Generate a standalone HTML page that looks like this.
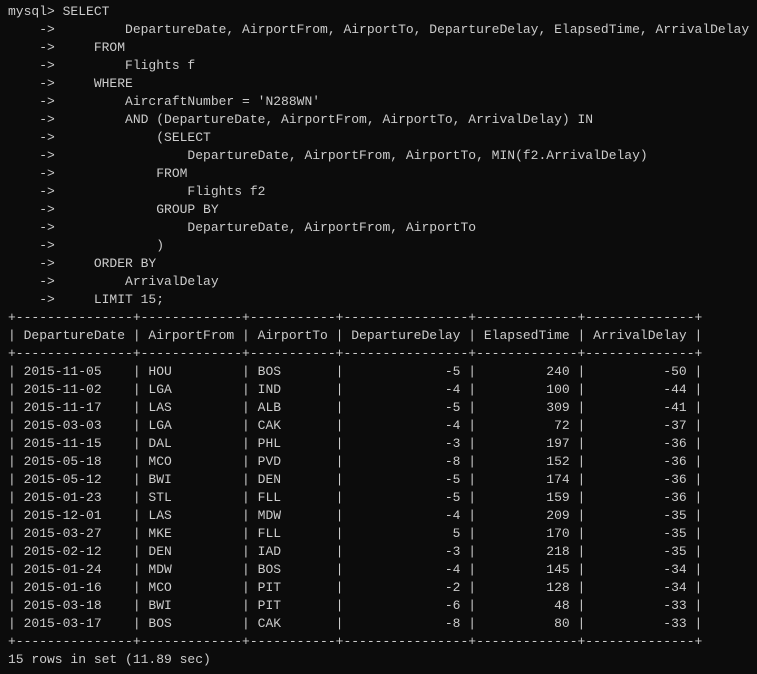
<!DOCTYPE html>
<html><head><meta charset="utf-8"><style>
html,body{margin:0;padding:0;background:#0c0c0c;width:757px;height:674px;overflow:hidden}
pre{margin:0;padding:3px 0 0 8px;font-family:"Liberation Mono","DejaVu Sans Mono",monospace;font-size:13px;line-height:18px;color:#cccccc;white-space:pre}
</style></head><body><pre>mysql&gt; SELECT
    -&gt;         DepartureDate, AirportFrom, AirportTo, DepartureDelay, ElapsedTime, ArrivalDelay
    -&gt;     FROM
    -&gt;         Flights f
    -&gt;     WHERE
    -&gt;         AircraftNumber = 'N288WN'
    -&gt;         AND (DepartureDate, AirportFrom, AirportTo, ArrivalDelay) IN
    -&gt;             (SELECT
    -&gt;                 DepartureDate, AirportFrom, AirportTo, MIN(f2.ArrivalDelay)
    -&gt;             FROM
    -&gt;                 Flights f2
    -&gt;             GROUP BY
    -&gt;                 DepartureDate, AirportFrom, AirportTo
    -&gt;             )
    -&gt;     ORDER BY
    -&gt;         ArrivalDelay
    -&gt;     LIMIT 15;
+---------------+-------------+-----------+----------------+-------------+--------------+
| DepartureDate | AirportFrom | AirportTo | DepartureDelay | ElapsedTime | ArrivalDelay |
+---------------+-------------+-----------+----------------+-------------+--------------+
| 2015-11-05    | HOU         | BOS       |             -5 |         240 |          -50 |
| 2015-11-02    | LGA         | IND       |             -4 |         100 |          -44 |
| 2015-11-17    | LAS         | ALB       |             -5 |         309 |          -41 |
| 2015-03-03    | LGA         | CAK       |             -4 |          72 |          -37 |
| 2015-11-15    | DAL         | PHL       |             -3 |         197 |          -36 |
| 2015-05-18    | MCO         | PVD       |             -8 |         152 |          -36 |
| 2015-05-12    | BWI         | DEN       |             -5 |         174 |          -36 |
| 2015-01-23    | STL         | FLL       |             -5 |         159 |          -36 |
| 2015-12-01    | LAS         | MDW       |             -4 |         209 |          -35 |
| 2015-03-27    | MKE         | FLL       |              5 |         170 |          -35 |
| 2015-02-12    | DEN         | IAD       |             -3 |         218 |          -35 |
| 2015-01-24    | MDW         | BOS       |             -4 |         145 |          -34 |
| 2015-01-16    | MCO         | PIT       |             -2 |         128 |          -34 |
| 2015-03-18    | BWI         | PIT       |             -6 |          48 |          -33 |
| 2015-03-17    | BOS         | CAK       |             -8 |          80 |          -33 |
+---------------+-------------+-----------+----------------+-------------+--------------+
15 rows in set (11.89 sec)
</pre></body></html>
